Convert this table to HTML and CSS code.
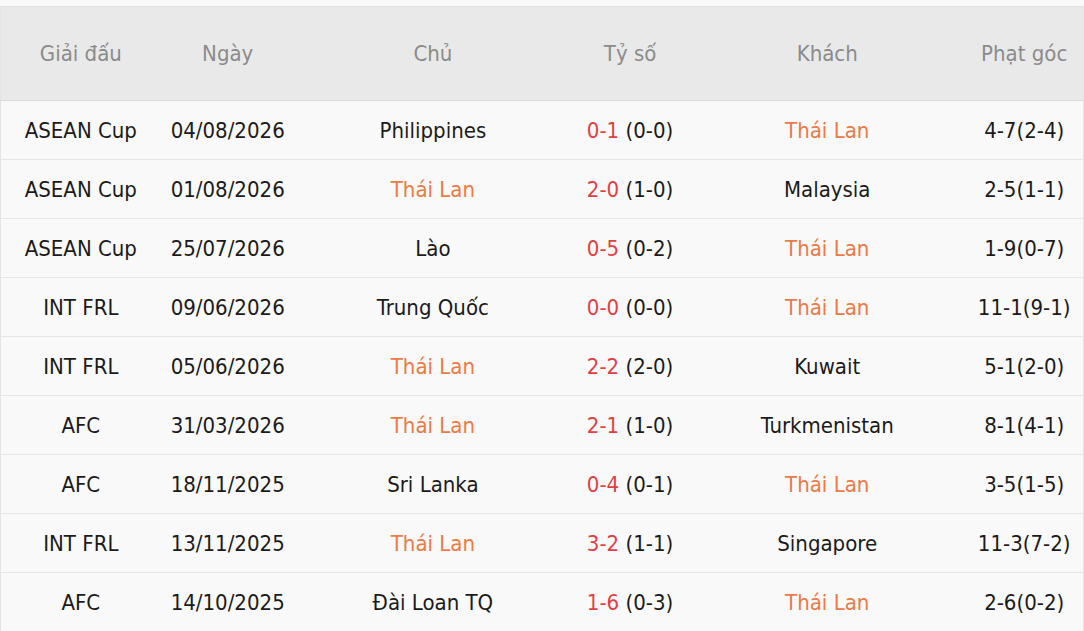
FILE: index.html
```html
<!DOCTYPE html>
<html lang="vi">
<head>
<meta charset="utf-8">
<title>Phạt góc</title>
<link rel="stylesheet" href="styles.css">
</head>
<body>
<div class="wrap">
<table class="matches">
  <colgroup>
    <col class="c-league"><col class="c-date"><col class="c-team"><col class="c-score"><col class="c-team"><col class="c-corner">
  </colgroup>
  <thead>
    <tr><th>Giải đấu</th><th>Ngày</th><th>Chủ</th><th>Tỷ số</th><th>Khách</th><th>Phạt góc</th></tr>
  </thead>
  <tbody>
    <tr><td>ASEAN Cup</td><td>04/08/2026</td><td>Philippines</td><td><span class="ft">0-1</span> (0-0)</td><td class="hl">Thái Lan</td><td>4-7(2-4)</td></tr>
    <tr><td>ASEAN Cup</td><td>01/08/2026</td><td class="hl">Thái Lan</td><td><span class="ft">2-0</span> (1-0)</td><td>Malaysia</td><td>2-5(1-1)</td></tr>
    <tr><td>ASEAN Cup</td><td>25/07/2026</td><td>Lào</td><td><span class="ft">0-5</span> (0-2)</td><td class="hl">Thái Lan</td><td>1-9(0-7)</td></tr>
    <tr><td>INT FRL</td><td>09/06/2026</td><td>Trung Quốc</td><td><span class="ft">0-0</span> (0-0)</td><td class="hl">Thái Lan</td><td>11-1(9-1)</td></tr>
    <tr><td>INT FRL</td><td>05/06/2026</td><td class="hl">Thái Lan</td><td><span class="ft">2-2</span> (2-0)</td><td>Kuwait</td><td>5-1(2-0)</td></tr>
    <tr><td>AFC</td><td>31/03/2026</td><td class="hl">Thái Lan</td><td><span class="ft">2-1</span> (1-0)</td><td>Turkmenistan</td><td>8-1(4-1)</td></tr>
    <tr><td>AFC</td><td>18/11/2025</td><td>Sri Lanka</td><td><span class="ft">0-4</span> (0-1)</td><td class="hl">Thái Lan</td><td>3-5(1-5)</td></tr>
    <tr><td>INT FRL</td><td>13/11/2025</td><td class="hl">Thái Lan</td><td><span class="ft">3-2</span> (1-1)</td><td>Singapore</td><td>11-3(7-2)</td></tr>
    <tr><td>AFC</td><td>14/10/2025</td><td>Đài Loan TQ</td><td><span class="ft">1-6</span> (0-3)</td><td class="hl">Thái Lan</td><td>2-6(0-2)</td></tr>
  </tbody>
</table>
</div>
</body>
</html>
```

FILE: styles.css
```css
html, body {
  margin: 0;
  padding: 0;
  background: #f9f9f9;
}
.wrap {
  padding-top: 6px;
}
.matches {
  width: 1084px;
  table-layout: fixed;
  border-collapse: collapse;
  font-family: "DejaVu Sans Condensed", "DejaVu Sans", sans-serif;
  font-size: 22px;
  color: #1b1b1b;
  background: #f9f9f9;
  border-left: 1px solid #e4e4e4;
  border-right: 1px solid #e4e4e4;
}
.c-league { width: 160px; }
.c-date { width: 134px; }
.c-team { width: 276px; }
.c-score { width: 118px; }
.c-corner { width: 118px; }
.matches th {
  height: 93px;
  padding: 0;
  background: #e9e9e9;
  color: #8b8b8b;
  font-weight: normal;
  text-align: center;
  border-top: 1px solid #e2e2e2;
  border-bottom: 1px solid #dadada;
}
.matches td {
  height: 58px;
  padding: 0;
  text-align: center;
  white-space: nowrap;
  border-bottom: 1px solid #e6e6e6;
}
.ft {
  color: #e23f45;
}
.hl {
  color: #ee7a45;
}
```
